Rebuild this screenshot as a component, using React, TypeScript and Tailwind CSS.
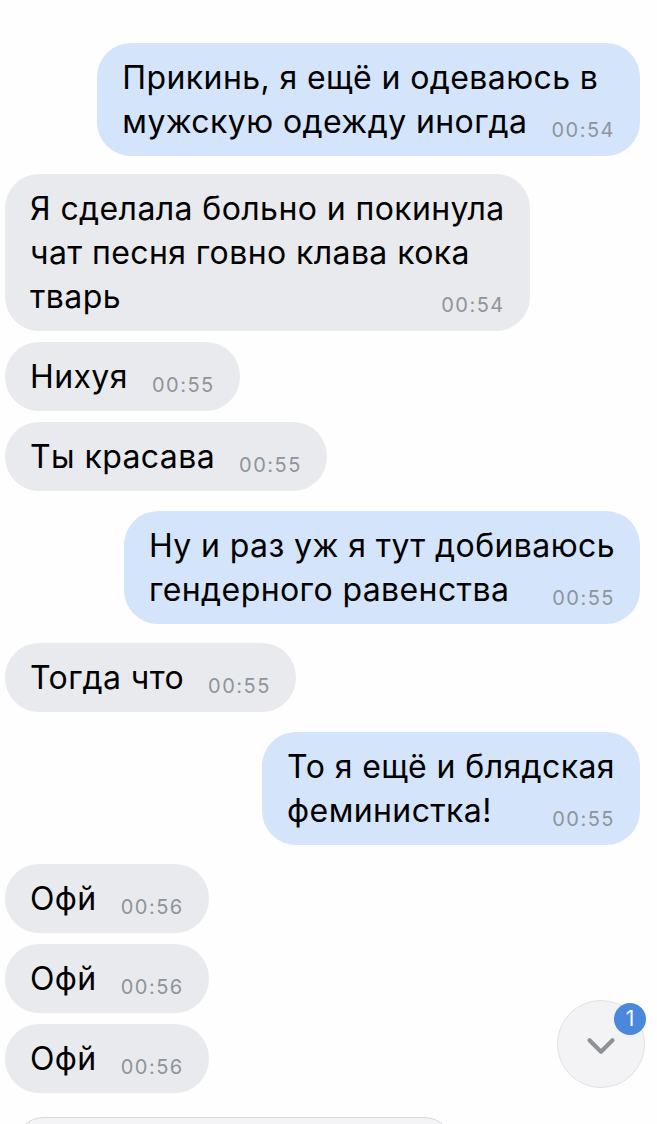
import { ChevronDown } from "lucide-react";

type Msg = { out?: boolean; lines: string[]; time: string; gap: string };

const messages: Msg[] = [
  { out: true, lines: ["Прикинь, я ещё и одеваюсь в", "мужскую одежду иногда"], time: "00:54", gap: "mt-[43px]" },
  { lines: ["Я сделала больно и покинула", "чат песня говно клава кока", "тварь"], time: "00:54", gap: "mt-[18px]" },
  { lines: ["Нихуя"], time: "00:55", gap: "mt-[11px]" },
  { lines: ["Ты красава"], time: "00:55", gap: "mt-[11px]" },
  { out: true, lines: ["Ну и раз уж я тут добиваюсь", "гендерного равенства"], time: "00:55", gap: "mt-[20px]" },
  { lines: ["Тогда что"], time: "00:55", gap: "mt-[19px]" },
  { out: true, lines: ["То я ещё и блядская", "феминистка!"], time: "00:55", gap: "mt-[20px]" },
  { lines: ["Офй"], time: "00:56", gap: "mt-[19px]" },
  { lines: ["Офй"], time: "00:56", gap: "mt-[11px]" },
  { lines: ["Офй"], time: "00:56", gap: "mt-[11px]" },
];

function Bubble({ m }: { m: Msg }) {
  const last = m.lines[m.lines.length - 1];
  return (
    <div className={`flex ${m.out ? "justify-end" : "justify-start"} ${m.gap}`}>
      <div
        className={`rounded-[34px] pl-[25px] pr-[25px] pt-[13px] pb-[12px] text-[32px] leading-[44px] tracking-[0.4px] text-black whitespace-nowrap ${
          m.out ? "bg-[#d4e4fb]" : "bg-[#e9eaee]"
        }`}
      >
        {m.lines.slice(0, -1).map((l) => (
          <div key={l} className="h-[44px]">{l}</div>
        ))}
        <div className="flex h-[44px] items-baseline justify-between gap-[24px]">
          <span>{last}</span>
          <span className="translate-y-[4px] text-[20px] leading-none tracking-[1.5px] text-[#8f949b]">{m.time}</span>
        </div>
      </div>
    </div>
  );
}

export default function App() {
  return (
    <div
      className="relative h-[1124px] w-[657px] overflow-hidden bg-[#fefefe]"
      style={{ fontFamily: "Inter, 'Noto Sans', sans-serif" }}
    >
      <div className="flex flex-col pl-[5px] pr-[17px]">
        {messages.map((m, i) => (
          <Bubble key={i} m={m} />
        ))}
        <div className="ml-[9px] mt-[24px] h-[60px] w-[440px] rounded-[30px] border border-[#d9d9dc] bg-[#f4f4f6]" />
      </div>

      <div className="absolute left-[557px] top-[1000px] flex h-[88px] w-[88px] items-center justify-center rounded-full border border-[#e1e1e4] bg-[#f3f3f5]">
        <ChevronDown className="mt-[4px] h-[46px] w-[46px] text-[#8e9196]" strokeWidth={2.2} />
        <div className="absolute left-[56px] top-[2px] flex h-[32px] w-[32px] items-center justify-center rounded-full bg-[#4a88dc] text-[21px] text-white">
          1
        </div>
      </div>
    </div>
  );
}
